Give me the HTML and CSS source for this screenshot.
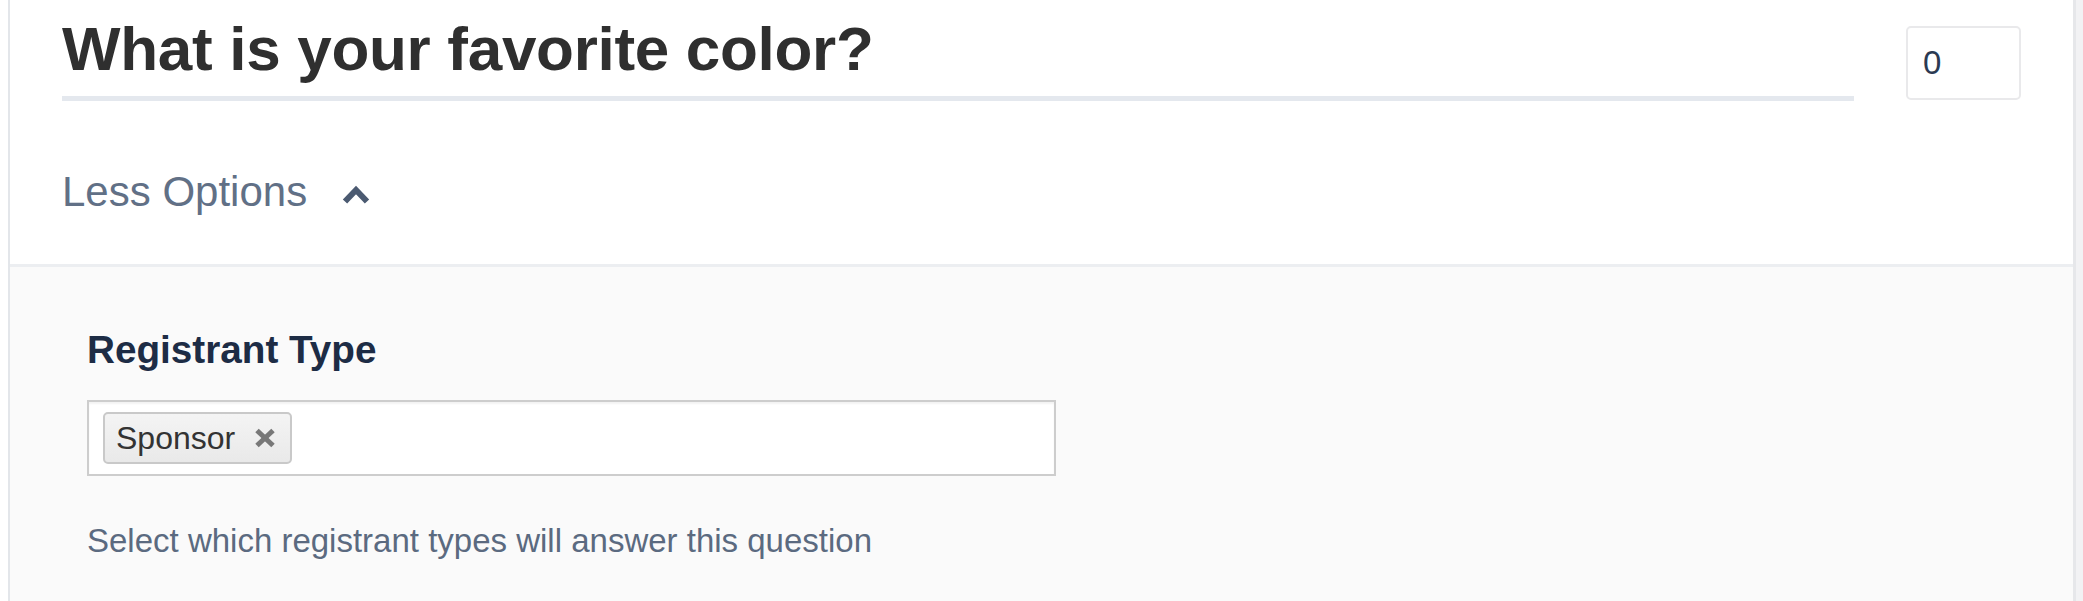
FILE: index.html
```html
<!DOCTYPE html>
<html lang="en">
<head>
<meta charset="utf-8">
<title>Question</title>
<link rel="stylesheet" href="styles.css">
</head>
<body>
<div class="page">
  <div class="card">
    <div class="card-head">
      <div class="title-row">
        <div class="title-wrap">
          <h1 class="title">What is your favorite color?</h1>
        </div>
        <div class="order-box"><span class="order-value">0</span></div>
      </div>
      <div class="toggle">
        <span class="toggle-text">Less Options</span>
        <svg class="chevron" width="28" height="19" viewBox="0 0 28 19" aria-hidden="true">
          <polyline points="3,16.5 14,5 25,16.5" fill="none" stroke="#4b5a71" stroke-width="6" stroke-linejoin="miter"/>
        </svg>
      </div>
    </div>
    <div class="card-body">
      <div class="field-label">Registrant Type</div>
      <div class="tag-input">
        <span class="tag">
          <span class="tag-text">Sponsor</span>
          <svg class="tag-x" width="24" height="22" viewBox="0 0 24 22" aria-hidden="true">
            <line x1="4" y1="3.5" x2="20" y2="18.5" stroke="#787878" stroke-width="5"/>
            <line x1="20" y1="3.5" x2="4" y2="18.5" stroke="#787878" stroke-width="5"/>
          </svg>
        </span>
      </div>
      <div class="help">Select which registrant types will answer this question</div>
    </div>
  </div>
</div>
</body>
</html>
```
FILE: styles.css
```css
* { box-sizing: border-box; }
html, body { margin: 0; padding: 0; }
body {
  background: #ffffff;
  font-family: "Liberation Sans", Arial, sans-serif;
}
.page {
  height: 601px;
  padding-left: 8px;
  border-right: 7px solid #f2f2f4;
  display: flex;
}
.card {
  flex: 1;
  display: flex;
  flex-direction: column;
  border-left: 2px solid #e3e6ea;
  border-right: 3px solid #e6e7ea;
}
.card-head {
  height: 267px;
  background: #ffffff;
  border-bottom: 3px solid #eceef1;
  padding: 0 52px;
}
.title-row {
  display: flex;
  align-items: flex-start;
}
.title-wrap {
  flex: 1;
  margin-top: 18px;
  padding-bottom: 16px;
  border-bottom: 5px solid #e4e8ee;
}
.title {
  margin: 0;
  font-size: 62px;
  line-height: 62px;
  font-weight: 700;
  color: #2f2f2f;
  letter-spacing: -0.3px;
}
.order-box {
  margin-left: 52px;
  margin-top: 26px;
  width: 115px;
  height: 74px;
  border: 2px solid #e9e9eb;
  border-radius: 5px;
  display: flex;
  align-items: center;
  padding-left: 15px;
}
.order-value {
  font-size: 33px;
  line-height: 33px;
  color: #2b3a52;
  margin-top: -2px;
}
.toggle {
  margin-top: 70px;
  display: flex;
  align-items: center;
  gap: 35px;
}
.toggle-text {
  font-size: 42px;
  line-height: 42px;
  color: #617086;
}
.chevron {
  margin-top: 4px;
}
.card-body {
  flex: 1;
  background: #fafafa;
  padding: 64px 77px 0;
}
.field-label {
  font-size: 38.7px;
  line-height: 38px;
  font-weight: 700;
  color: #1d2c45;
}
.tag-input {
  margin-top: 31px;
  width: 969px;
  height: 76px;
  background: #ffffff;
  border: 2px solid #cdcdcd;
  box-shadow: inset 0 2px 2px rgba(0,0,0,0.05);
  display: flex;
  align-items: center;
  padding-left: 14px;
}
.tag {
  height: 52px;
  display: inline-flex;
  align-items: center;
  gap: 18px;
  padding: 0 13px 0 11px;
  border: 2px solid #c9c9c9;
  border-radius: 5px;
  background: linear-gradient(#f4f4f4, #e9e9e9);
}
.tag-text {
  font-size: 32px;
  line-height: 32px;
  color: #333333;
}
.help {
  margin-top: 48px;
  font-size: 33px;
  line-height: 33px;
  color: #5b6a80;
}
```
